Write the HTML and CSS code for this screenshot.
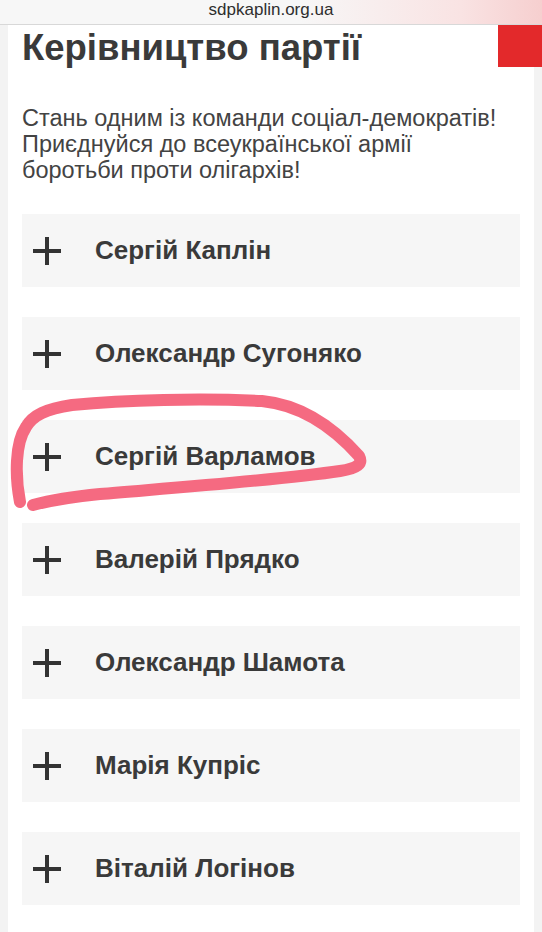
FILE: index.html
```html
<!DOCTYPE html>
<html lang="uk">
<head>
<meta charset="utf-8">
<title>Керівництво партії</title>
<link rel="stylesheet" href="styles.css">
</head>
<body>
<div class="urlbar">sdpkaplin.org.ua</div>
<div class="menu-btn"></div>
<main class="page">
  <h1 class="title">Керівництво партії</h1>
  <p class="intro">Стань одним із команди соціал-демократів!<br>Приєднуйся до всеукраїнської армії<br>боротьби проти олігархів!</p>
  <ul class="people">
    <li class="person"><span class="plus"></span><span class="name">Сергій Каплін</span></li>
    <li class="person"><span class="plus"></span><span class="name">Олександр Сугоняко</span></li>
    <li class="person"><span class="plus"></span><span class="name">Сергій Варламов</span></li>
    <li class="person"><span class="plus"></span><span class="name">Валерій Прядко</span></li>
    <li class="person"><span class="plus"></span><span class="name">Олександр Шамота</span></li>
    <li class="person"><span class="plus"></span><span class="name">Марія Купріс</span></li>
    <li class="person"><span class="plus"></span><span class="name">Віталій Логінов</span></li>
  </ul>
</main>
<svg class="scribble" width="542" height="932" viewBox="0 0 542 932">
  <path d="M20 502 C15 476 15 443 26 427 C33 415 46 409 72 405 C125 400 200 398 262 401 C302 405 334 428 359 456 C363 464 358 468 340 471 C280 480 170 488 100 494 C70 497 52 500 33 505" />
</svg>
</body>
</html>
```
FILE: styles.css
```css
html, body {
  margin: 0;
  padding: 0;
}
body {
  background: #f3f3f3;
  font-family: "Liberation Sans", Arial, Helvetica, sans-serif;
  width: 542px;
  height: 932px;
  overflow: hidden;
  position: relative;
}
.urlbar {
  height: 24px;
  line-height: 19px;
  text-align: center;
  font-size: 17px;
  color: #2e2e2e;
  background: linear-gradient(to right, #f7f7f7 0%, #f7f7f7 55%, #f9e3e3 85%, #f6cfcf 100%);
  border-bottom: 1px solid #d8d8d8;
}
.menu-btn {
  position: absolute;
  top: 25px;
  right: 0;
  width: 44px;
  height: 42px;
  background: #e3292b;
}
.page {
  margin: 0 8px 0 8px;
  background: #fff;
  padding: 3px 14px 40px 14px;
  min-height: 900px;
}
.title {
  margin: 0;
  font-size: 36.5px;
  line-height: 40px;
  font-weight: bold;
  color: #3a3a3a;
}
.intro {
  margin: 37px 0 0 0;
  font-size: 23.5px;
  line-height: 26px;
  color: #434343;
}
.people {
  list-style: none;
  margin: 31px 0 0 0;
  padding: 0;
  display: flex;
  flex-direction: column;
  gap: 30px;
}
.person {
  height: 73px;
  background: #f6f6f6;
  display: flex;
  align-items: center;
  padding-left: 11px;
}
.plus {
  width: 28px;
  height: 28px;
  position: relative;
  flex: none;
  margin-right: 34px;
}
.plus::before, .plus::after {
  content: "";
  position: absolute;
  background: #333;
}
.plus::before {
  left: 0;
  right: 0;
  top: 12px;
  height: 4px;
}
.plus::after {
  top: 0;
  bottom: 0;
  left: 12px;
  width: 4px;
}
.name {
  font-size: 26px;
  font-weight: bold;
  color: #3a3a3a;
}
.scribble {
  position: absolute;
  left: 0;
  top: 0;
  pointer-events: none;
}
.scribble path {
  fill: none;
  stroke: #f45d76;
  stroke-opacity: 0.92;
  stroke-width: 12;
  stroke-linecap: round;
  stroke-linejoin: round;
}
```
